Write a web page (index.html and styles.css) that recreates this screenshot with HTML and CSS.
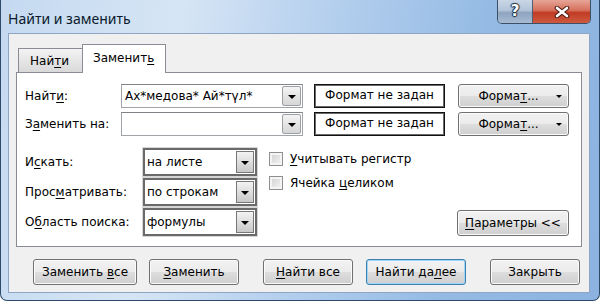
FILE: index.html
```html
<!DOCTYPE html>
<html lang="ru">
<head>
    <meta charset="UTF-8">
    <title>Найти и заменить</title>
    <link rel="stylesheet" href="styles.css">
</head>
<body>
    <div class="window">
        <div class="titlebar">
            <span class="title">Найти и заменить</span>
            <div class="caption">
                <div class="cap-help">?</div>
                <div class="cap-close">
                    <svg width="16" height="12" viewBox="0 0 16 12">
                        <path d="M3 2 L13 10 M13 2 L3 10" stroke="#4a1d14" stroke-width="4.6" stroke-linecap="round"/>
                        <path d="M3 2 L13 10 M13 2 L3 10" stroke="#fff" stroke-width="2.6" stroke-linecap="round"/>
                    </svg>
                </div>
            </div>
        </div>
        <div class="client">
            <div class="tabs">
                <div class="tab">Най<u>т</u>и</div>
                <div class="tab active">Заменит<u>ь</u></div>
            </div>
            <div class="panel">
                <div class="row">
                    <div class="label">Найт<u>и</u>:</div>
                    <div class="combo">
                        <span class="combo-text">Ах*медова* Ай*түл*</span>
                        <span class="combo-btn"><span class="arrow"></span></span>
                    </div>
                    <div class="format-box">Формат не задан</div>
                    <div class="btn format-btn"><span>Форма<u>т</u>...</span><span class="small-arrow"></span></div>
                </div>
                <div class="row row-second">
                    <div class="label">З<u>а</u>менить на:</div>
                    <div class="combo">
                        <span class="combo-text"></span>
                        <span class="combo-btn"><span class="arrow"></span></span>
                    </div>
                    <div class="format-box">Формат не задан</div>
                    <div class="btn format-btn"><span>Форма<u>т</u>...</span><span class="small-arrow"></span></div>
                </div>
                <div class="options">
                    <div class="option-grid">
                        <div class="opt-label">И<u>с</u>кать:</div>
                        <div class="select"><span class="select-text">на листе</span><span class="select-btn"><span class="arrow"></span></span></div>
                        <div class="opt-label">Прос<u>м</u>атривать:</div>
                        <div class="select"><span class="select-text">по строкам</span><span class="select-btn"><span class="arrow"></span></span></div>
                        <div class="opt-label">О<u>б</u>ласть поиска:</div>
                        <div class="select"><span class="select-text">формулы</span><span class="select-btn"><span class="arrow"></span></span></div>
                    </div>
                    <div class="checks">
                        <div class="check"><span class="box"></span><span><u>У</u>читывать регистр</span></div>
                        <div class="check"><span class="box"></span><span>Ячейка <u>ц</u>еликом</span></div>
                    </div>
                    <div class="btn params-btn"><span><u>П</u>араметры &lt;&lt;</span></div>
                </div>
            </div>
            <div class="actions">
                <div class="btn act-replace-all"><span>Заменить <u>в</u>се</span></div>
                <div class="btn act-replace"><span><u>З</u>аменить</span></div>
                <div class="btn act-find-all"><span><u>Н</u>айти все</span></div>
                <div class="btn act-find-next default"><span>Найти да<u>л</u>ее</span></div>
                <div class="btn act-close"><span>Закрыть</span></div>
            </div>
        </div>
    </div>
</body>
</html>
```

FILE: styles.css
```css
*{
    margin: 0px;
    padding: 0px;
    box-sizing: border-box;
}
body {
    width: 600px;
    height: 304px;
    background-color: #fff;
    font-family: 'DejaVu Sans', Verdana, sans-serif;
    font-size: 12px;
    color: #000;
    overflow: hidden;
}
u {
    text-decoration: underline;
    text-underline-offset: 2px;
}
.window {
    width: 600px;
    height: 301px;
    border: 1px solid #2e4a6b;
    border-top: none;
    border-radius: 0 0 7px 7px;
    background: linear-gradient(100deg, #c4d9f0 0%, #d6e5f5 28%, #b6d0ee 50%, #95bbe4 75%, #8cb3e0 100%);
    display: flex;
    flex-direction: column;
}
.titlebar {
    height: 33px;
    display: flex;
    align-items: flex-start;
    padding: 0 8px 0 7px;
}
.title {
    font-family: 'Noto Sans', 'Open Sans', sans-serif;
    font-size: 14px;
    margin-top: 9px;
    color: #0b1a2c;
}
.caption {
    margin-left: auto;
    display: flex;
    height: 24px;
    border: 1px solid #3d4f66;
    border-top: none;
    border-radius: 0 0 5px 5px;
    overflow: hidden;
}
.cap-help {
    width: 35px;
    background: linear-gradient(#c9d6e6 0%, #b3c4d9 45%, #8ea4bf 55%, #a7bbd3 100%);
    border-right: 1px solid #4e5f75;
    color: #fff;
    font-family: 'DejaVu Sans', sans-serif;
    font-weight: bold;
    font-size: 15px;
    text-align: center;
    line-height: 22px;
    text-shadow: 0 0 1px #1f2d3f, 1px 0 1px #1f2d3f, -1px 0 1px #1f2d3f, 0 1px 1px #1f2d3f, 0 -1px 1px #1f2d3f;
}
.cap-close {
    width: 57px;
    background: linear-gradient(#e7a597 0%, #d6705c 45%, #c23b24 55%, #cd5a3f 100%);
    display: flex;
    align-items: center;
    justify-content: center;
}
.client {
    margin-left: 7px;
    width: 582px;
    height: 260px;
    border: 1px solid #8ea6c3;
    background-color: #f0f0f0;
    padding: 10px 7px 0 7px;
}
.tabs {
    display: flex;
    align-items: flex-end;
    height: 28px;
    padding-left: 2px;
}
.tab {
    height: 24px;
    width: 64px;
    border: 1px solid #898c95;
    border-bottom: none;
    border-right: none;
    background: linear-gradient(#f3f3f3, #d9d9d9);
    padding: 5px 0 0 11px;
}
.tab.active {
    height: 29px;
    width: 84px;
    border-right: 1px solid #898c95;
    background: #fff;
    margin-bottom: -1px;
    position: relative;
    padding: 6px 0 0 10px;
}
.panel {
    height: 175px;
    border: 1px solid #898c95;
    background-color: #fff;
    padding: 11px 12px 0 8px;
}
.row {
    display: flex;
    align-items: center;
    height: 24px;
}
.row-second {
    margin-top: 4px;
}
.label {
    width: 96px;
}
.combo {
    width: 182px;
    height: 24px;
    border: 1px solid #a0a3a8;
    border-top-color: #7f8388;
    background: #fff;
    display: flex;
    align-items: center;
    padding: 1px 1px 1px 3px;
}
.combo-text {
    flex: 1;
}
.combo-btn {
    width: 19px;
    height: 20px;
    border: 1px solid #9c9fa4;
    border-radius: 2px;
    background: linear-gradient(#f4f4f4, #d6d6d6);
    display: flex;
    align-items: center;
    justify-content: center;
}
.arrow {
    width: 0;
    height: 0;
    border-left: 4px solid transparent;
    border-right: 4px solid transparent;
    border-top: 4px solid #000;
    margin-top: 1px;
}
.format-box {
    margin-left: 11px;
    width: 131px;
    height: 24px;
    border: 1px solid #111;
    box-shadow: inset 0 0 0 1px #6a6a6a;
    text-align: center;
    line-height: 21px;
}
.btn {
    height: 26px;
    border: 1px solid #707070;
    border-radius: 3px;
    background: linear-gradient(#f2f2f2 0%, #ebebeb 48%, #dddddd 52%, #cfcfcf 100%);
    box-shadow: inset 0 0 0 1px #fbfbfb;
    display: flex;
    align-items: center;
    justify-content: center;
}
.format-btn {
    margin-left: 13px;
    width: 111px;
    height: 24px;
    position: relative;
    padding-right: 10px;
}
.small-arrow {
    position: absolute;
    right: 6px;
    top: 10px;
    border-left: 3px solid transparent;
    border-right: 3px solid transparent;
    border-top: 3px solid #000;
}
.options {
    display: flex;
    margin-top: 12px;
    height: 98px;
}
.option-grid {
    display: grid;
    grid-template-columns: 118px 114px;
    grid-auto-rows: 28px;
    row-gap: 2px;
    align-items: center;
}
.select {
    height: 28px;
    border: 2px solid #6a6a6a;
    box-shadow: 0 0 0 1px #d6d6d6;
    background: #fff;
    display: flex;
    align-items: center;
    padding: 1px 1px 1px 2px;
}
.select-text {
    flex: 1;
}
.select-btn {
    width: 18px;
    height: 22px;
    border: 1px solid #777;
    background: linear-gradient(#f3f3f3, #c8c8c8);
    display: flex;
    align-items: center;
    justify-content: center;
}
.checks {
    margin-left: 12px;
    padding-top: 4px;
    display: flex;
    flex-direction: column;
    gap: 10px;
}
.check {
    display: flex;
    align-items: center;
    height: 14px;
}
.box {
    width: 14px;
    height: 14px;
    border: 1px solid #8e8f8f;
    background: linear-gradient(135deg, #cfcfcf, #f6f6f6);
    box-shadow: inset 0 0 0 2px #f4f4f4;
    margin-right: 7px;
}
.params-btn {
    margin-left: auto;
    align-self: flex-end;
    margin-bottom: 10px;
    width: 112px;
}
.actions {
    display: flex;
    margin-top: 12px;
    padding-left: 17px;
}
.act-replace-all {
    width: 104px;
}
.act-replace {
    width: 90px;
    margin-left: 12px;
}
.act-find-all {
    width: 90px;
    margin-left: 24px;
}
.act-find-next {
    width: 100px;
    margin-left: 13px;
}
.act-close {
    width: 90px;
    margin-left: 24px;
}
.btn.default {
    border-color: #3c7fb1;
    box-shadow: inset 0 0 0 1px #9fd5f3;
}
```
